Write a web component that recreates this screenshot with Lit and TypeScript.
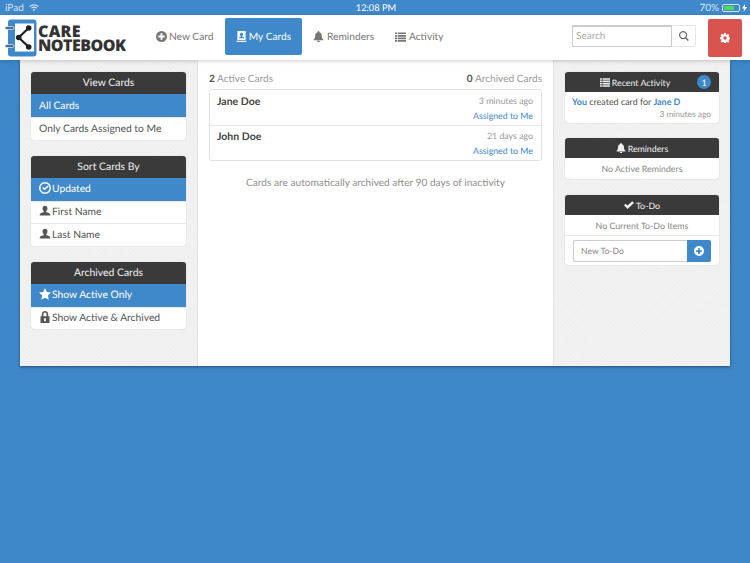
import { LitElement, html, css, svg } from "lit";
import { customElement } from "lit/decorators.js";

const paths: Record<string, unknown> = {
  plus: svg`<path fill-rule="evenodd" d="M8 0a8 8 0 1 1 0 16A8 8 0 0 1 8 0zM6.6 3.4v3.2H3.4v2.8h3.2v3.2h2.8V9.400h3.200V6.600H9.400V3.400z"/>`,
  card: svg`<path fill-rule="evenodd" d="M2 0h12v13H2zM8 2.500a2.200 2.200 0 0 0-2.200 2.500c0 1.200.6 2 1.200 2.500v.8c-1.500.4-3 .9-3 2.200h8c0-1.300-1.500-1.800-3-2.200v-.8c.6-.5 1.200-1.300 1.200-2.500A2.200 2.200 0 0 0 8 2.500zM1 14h14v2H1z"/>`,
  bell: svg`<path d="M8 0a1.300 1.300 0 0 1 1.300 1.300v.4C11.700 2.300 12.800 4.300 12.800 7c0 2.600.8 4 2.200 5.400v1.100H1v-1.100C2.400 11 3.200 9.600 3.200 7c0-2.700 1.100-4.700 3.500-5.300v-.4A1.300 1.300 0 0 1 8 0zM6 14.300h4a2 2 0 0 1-4 0z"/>`,
  list: svg`<path d="M0 2h3v2.500H0zM4 2h12v2.500H4zM0 5.700h3v2.500H0zM4 5.700h12v2.500H4zM0 9.400h3v2.500H0zM4 9.400h12v2.500H4zM0 13h3v2.500H0zM4 13h12v2.500H4z"/>`,
  search: svg`<path fill-rule="evenodd" d="M6.500 0a6.500 6.500 0 0 1 5.200 10.400l4 4-1.500 1.500-4-4A6.500 6.500 0 1 1 6.500 0zm0 2a4.500 4.500 0 1 0 0 9 4.500 4.500 0 0 0 0-9z"/>`,
  cog: svg`<path fill-rule="evenodd" d="M6.600 0h2.800l.4 2.200 1.300.6 1.900-1.300 2 2-1.300 1.900.6 1.300 2.200.4v2.800l-2.200.4-.6 1.300 1.300 1.900-2 2-1.900-1.300-1.300.6-.4 2.200H6.600l-.4-2.200-1.300-.6L3 15.300l-2-2 1.300-1.900-.6-1.300L-.500 9.700V6.900l2.200-.4.6-1.300L1 3.300l2-2 1.900 1.300 1.300-.6zM8 5.300a2.700 2.700 0 1 0 0 5.400 2.700 2.700 0 0 0 0-5.400z"/>`,
  clock: svg`<path fill-rule="evenodd" d="M8 0a8 8 0 1 1 0 16A8 8 0 0 1 8 0zm0 2a6 6 0 1 0 0 12A6 6 0 0 0 8 2zm3.700 2.600 1.300 1.300-5.600 5.200-3.200-3 1.300-1.400 1.900 1.700z"/>`,
  user: svg`<path d="M8 1c2 0 3.300 1.500 3.300 3.500 0 1.500-.7 2.900-1.600 3.700v1.300c2.300.6 5.300 1.300 5.300 3.500v1H1v-1c0-2.200 3-2.900 5.300-3.500V8.200C5.400 7.400 4.700 6 4.700 4.500 4.700 2.500 6 1 8 1z"/>`,
  star: svg`<path d="M8 0l2.400 5.300 5.600.7-4.100 3.900 1.100 5.800L8 12.900l-5 2.800 1.100-5.800L0 6l5.600-.7z"/>`,
  lock: svg`<path fill-rule="evenodd" d="M8 0c2.600 0 4.300 1.800 4.300 4.400V7H14v9H2V7h1.700V4.400C3.700 1.800 5.400 0 8 0zm0 2C6.700 2 5.900 3 5.900 4.400V7h4.200V4.400C10.100 3 9.300 2 8 2zM6.800 9.500v4h2.400v-4z"/>`,
  check: svg`<path d="M0 8.500l2.600-2.600 3 3L13.200 2 16 4.800 5.600 14.500z"/>`,
  wifi: svg`<path d="M8 12.800 6 10.600a3 3 0 0 1 4 0zM4.600 9.100 3.300 7.700a7 7 0 0 1 9.400 0l-1.300 1.400a5 5 0 0 0-6.800 0zM1.900 6.200.6 4.800a11 11 0 0 1 14.800 0l-1.300 1.400a9 9 0 0 0-12.200 0z"/>`,
};

const icon = (name: string, size = 12, cls = "") =>
  html`<svg class="ic ${cls}" width=${size} height=${size} viewBox="0 0 16 16" fill="currentColor" aria-hidden="true">${paths[name]}</svg>`;

@customElement("app-root")
export class AppRoot extends LitElement {
  static styles = css`
    :host {
      display: block;
      width: 750px;
      height: 563px;
      overflow: hidden;
      background: #3e87c8;
      font-family: Lato, "Open Sans", sans-serif;
      font-size: 10.300px;
      color: #444;
      text-rendering: geometricPrecision;
    }
    * { box-sizing: border-box; }
    .ic { flex: none; display: block; }
    .status {
      height: 15px;
      background: #3f88c9;
      color: #d4e5f4;
      font-size: 10px;
      display: grid;
      grid-template-columns: 1fr auto 1fr;
      align-items: center;
      padding: 0 3px 0 5px;
    }
    .status-l { display: flex; align-items: center; gap: 5px; }
    .status-c { color: #fff; font-size: 9.300px; }
    .status-r { display: flex; justify-content: flex-end; align-items: center; gap: 2px; }
    .battery {
      width: 18px; height: 8px; border: 1px solid #d4e5f4; border-radius: 2px;
      padding: 1px; margin-left: 1px; display: flex;
    }
    .battery i { display: block; width: 72%; background: #4cd964; }
    .bolt { fill: #fff; }
    .top {
      position: relative;
      z-index: 2;
      height: 45px;
      background: #fff;
      box-shadow: 0 1px 4px rgba(0, 0, 0, 0.2);
      display: flex;
      align-items: center;
      padding: 0 8px 2px 3px;
    }
    .logo { display: flex; align-items: center; width: 153px; flex: none; margin-top: 2px; }
    .wordmark {
      margin-left: 1px;
      font-family: "Open Sans", sans-serif;
      font-weight: 800;
      color: #333;
      font-size: 16px;
      line-height: 14px;
      letter-spacing: -0.500px;
    }
    .wordmark div { height: 14px; }
    .wordmark .care { letter-spacing: 0.300px; }
    .nav { display: flex; align-items: center; gap: 10px; font-size: 10.200px; color: #777; }
    .nav-item { display: flex; align-items: center; gap: 2px; height: 37px; }
    .nav-item.n1 { width: 59px; }
    .nav-item.active {
      width: 77px; justify-content: center;
      background: #3f88c9; color: #fff; border-radius: 2px;
    }
    .nav-item.n3 { width: 62px; margin-left: 1px; gap: 3px; }
    .nav-item.n4 { width: 47px; margin-left: 10px; gap: 3px; }
    .spacer { flex: 1; }
    .search { display: flex; height: 22px; margin: 0 12px 2px 0; }
    .search-input {
      width: 100px; height: 22px; border: 1px solid #ccc; border-top-width: 2px;
      padding: 0 3px; color: #aaa; font-size: 10px; line-height: 18px; background: #fff;
    }
    .search-btn {
      width: 24px; display: flex; align-items: center; justify-content: center;
      border: 1px solid #e6e6e6; border-left: 0; border-radius: 0 2px 2px 0; color: #666;
    }
    .gear {
      width: 34px; height: 38px; background: #d9534f; color: #fff; border-radius: 2px;
      display: flex; align-items: center; justify-content: center; margin-top: 2px;
    }
    .panel {
      margin: 0 20px;
      height: 306px;
      display: grid;
      grid-template-columns: 178px 355px 177px;
      box-shadow: 0 1px 3px rgba(0, 0, 0, 0.4);
      background: #fff;
    }
    .side {
      background-color: #f0f0f0;
      background-image: repeating-linear-gradient(45deg, rgba(255,255,255,.16) 0 1px, transparent 1px 3px),
        repeating-linear-gradient(-45deg, rgba(0,0,0,.008) 0 1px, transparent 1px 3px);
      padding: 12px 11px;
      display: flex;
      flex-direction: column;
    }
    .side.left { border-right: 1px solid #e2e2e2; gap: 16px; }
    .side.right { border-left: 1px solid #e2e2e2; padding: 12px 11px 0; }
    .box { background: #fff; border-radius: 3px; box-shadow: 0 0 1px rgba(0,0,0,.25); overflow: hidden; }
    .box-h {
      height: 22px; background: #3a3a3a; color: #f0f0f0; font-size: 10.400px;
      display: flex; align-items: center; justify-content: center; gap: 2px;
    }
    .row {
      height: 22.500px; display: flex; align-items: center; gap: 1px; padding-left: 8px;
      font-size: 10.300px; color: #555; border-top: 1px solid #e8e8e8;
    }
    .row .ic { margin-bottom: 2px; }
    .row.on { background: #3f88c9; color: #fff; border-top: 0; height: 23px; }
    .center { padding: 11px 11px 0; display: flex; flex-direction: column; }
    .counts { display: flex; justify-content: space-between; color: #999; font-size: 10.100px; height: 18px; line-height: 14px; padding-top: 1px; }
    .counts b { color: #555; font-weight: 700; }
    .list { border: 1px solid #e2e2e2; border-radius: 3px; }
    .card {
      height: 35px; padding: 3px 8px 0 7px; display: flex; justify-content: space-between;
    }
    .card + .card { border-top: 1px solid #e6e6e6; padding-top: 2px; }
    .name { font-weight: 700; color: #444; font-size: 10.500px; line-height: 15px; margin-top: 2px; }
    .meta { text-align: right; font-size: 8.800px; color: #999; line-height: 15px; }
    .meta a { display: block; color: #3f88c9; }
    .note { margin-top: 16px; text-align: center; color: #8f8f8f; font-size: 10.150px; }
    .right .box-h { height: 20px; font-size: 8.800px; position: relative; }
    .right .box { margin-bottom: 15px; }
    .right .box.second { margin-bottom: 16px; }
    .right .box-h.with-badge { padding-right: 14px; }
    .badge {
      position: absolute; right: 8px; top: 3px; width: 14px; height: 14px; border-radius: 50%;
      background: #3f88c9; color: #fff; font-size: 9px; display: flex; align-items: center; justify-content: center;
    }
    .activity { padding: 4px 8px 0 7px; height: 31px; font-size: 8.950px; color: #555; line-height: 12px; }
    .activity b { color: #3f88c9; }
    .ago { text-align: right; font-size: 8.400px; color: #999; line-height: 12px; }
    .empty { height: 21px; display: flex; align-items: center; justify-content: center; color: #888; font-size: 8.800px; }
    .empty.short { height: 20px; }
    .todo { border-top: 1px solid #e8e8e8; height: 30px; padding: 4px 8px; display: flex; }
    .todo-input {
      width: 114px; height: 22px; border: 1px solid #ccc; border-right: 0; border-radius: 2px 0 0 2px;
      padding: 0 7px; font-size: 8.600px; line-height: 20px; color: #888;
    }
    .todo-btn {
      width: 24px; height: 22px; background: #3f88c9; color: #fff; border-radius: 0 2px 2px 0;
      display: flex; align-items: center; justify-content: center;
    }
  `;

  private leftBox(title: string, rows: [string, string | null, boolean][]) {
    return html`<section class="box">
      <div class="box-h">${title}</div>
      ${rows.map(([t, ic, on]) => html`<div class="row ${on ? "on" : ""}">${ic ? icon(ic, 12) : ""}<span>${t}</span></div>`)}
    </section>`;
  }

  render() {
    return html`
      <div class="status">
        <div class="status-l"><span>iPad</span>${icon("wifi", 10)}</div>
        <div class="status-c">12:08 PM</div>
        <div class="status-r"><span>70%</span><span class="battery"><i></i></span>
          <svg class="ic bolt" width="5" height="8" viewBox="0 0 5 8"><path d="M3 0 0 4.500h2L1.500 8 5 3H3z"/></svg></div>
      </div>
      <header class="top">
        <div class="logo">
          <svg class="ic" width="34" height="38" viewBox="0 0 34 38">
            <rect x="5" y="0.500" width="28.500" height="37" rx="3" fill="#3f88c9"/>
            <rect x="12" y="4.500" width="19" height="28" fill="#fff"/>
            <rect x="2" y="7.500" width="9" height="3" rx="1.500" fill="#4a6f92" stroke="#fff" stroke-width=".6"/>
            <rect x="2" y="25.500" width="9" height="3" rx="1.500" fill="#4a6f92" stroke="#fff" stroke-width=".6"/>
            <path d="M25.700 9 15.700 18.500l10 9.500" fill="none" stroke="#222" stroke-width="2.200"/>
            <circle cx="25.700" cy="9" r="2.800" fill="#222"/><circle cx="15.700" cy="18.500" r="2.800" fill="#222"/><circle cx="25.700" cy="28" r="2.800" fill="#222"/>
          </svg>
          <div class="wordmark"><div class="care">CARE</div><div>NOTEBOOK</div></div>
        </div>
        <nav class="nav">
          <div class="nav-item n1">${icon("plus", 11)}<span>New Card</span></div>
          <div class="nav-item active">${icon("card", 11)}<span>My Cards</span></div>
          <div class="nav-item n3">${icon("bell", 11)}<span>Reminders</span></div>
          <div class="nav-item n4">${icon("list", 11)}<span>Activity</span></div>
        </nav>
        <div class="spacer"></div>
        <div class="search">
          <div class="search-input">Search</div>
          <div class="search-btn">${icon("search", 10)}</div>
        </div>
        <div class="gear">${icon("cog", 10)}</div>
      </header>
      <main class="panel">
        <aside class="side left">
          ${this.leftBox("View Cards", [["All Cards", null, true], ["Only Cards Assigned to Me", null, false]])}
          ${this.leftBox("Sort Cards By", [["Updated", "clock", true], ["First Name", "user", false], ["Last Name", "user", false]])}
          ${this.leftBox("Archived Cards", [["Show Active Only", "star", true], ["Show Active & Archived", "lock", false]])}
        </aside>
        <section class="center">
          <div class="counts"><span><b>2</b> Active Cards</span><span><b>0</b> Archived Cards</span></div>
          <div class="list">
            <div class="card"><span class="name">Jane Doe</span><div class="meta">3 minutes ago<a>Assigned to Me</a></div></div>
            <div class="card"><span class="name">John Doe</span><div class="meta">21 days ago<a>Assigned to Me</a></div></div>
          </div>
          <div class="note">Cards are automatically archived after 90 days of inactivity</div>
        </section>
        <aside class="side right">
          <section class="box">
            <div class="box-h with-badge">${icon("list", 10)}<span>Recent Activity</span><span class="badge">1</span></div>
            <div class="activity"><b>You</b> created card for <b>Jane D</b><div class="ago">3 minutes ago</div></div>
          </section>
          <section class="box second">
            <div class="box-h">${icon("bell", 10)}<span>Reminders</span></div>
            <div class="empty">No Active Reminders</div>
          </section>
          <section class="box">
            <div class="box-h">${icon("check", 10)}<span>To-Do</span></div>
            <div class="empty short">No Current To-Do Items</div>
            <div class="todo"><div class="todo-input">New To-Do</div><div class="todo-btn">${icon("plus", 10)}</div></div>
          </section>
        </aside>
      </main>
    `;
  }
}
